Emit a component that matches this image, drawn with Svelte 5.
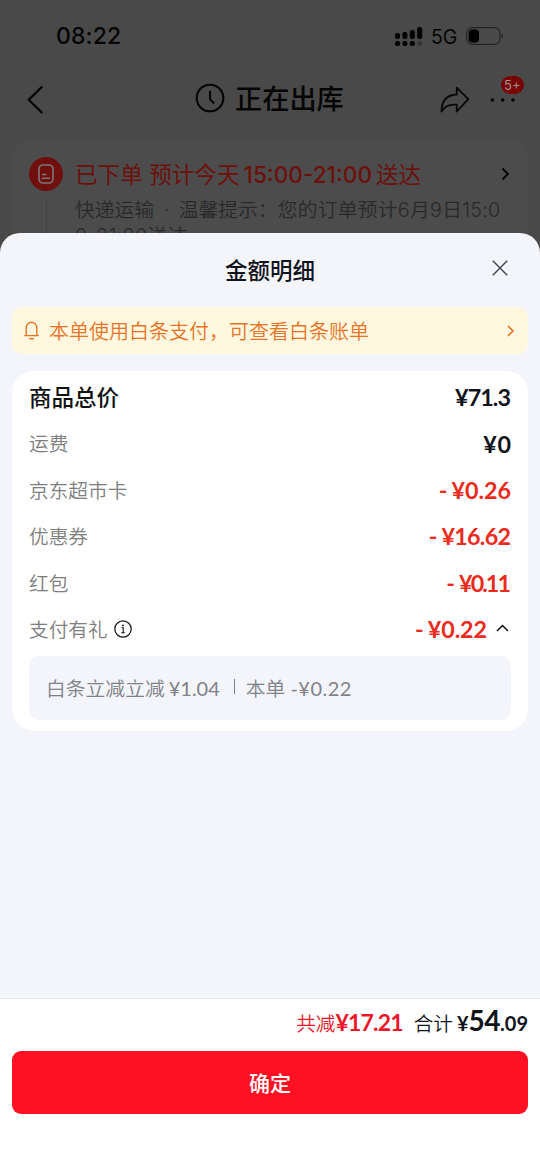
<script>
  const rows = [
    { label: '商品总价', value: '¥71.3', kind: 'total', spacing: -0.9 },
    { label: '运费', value: '¥0', kind: 'plain', spacing: 0.6 },
    { label: '京东超市卡', value: '¥0.26', kind: 'off', spacing: 0 },
    { label: '优惠券', value: '¥16.62', kind: 'off', spacing: -0.7 },
    { label: '红包', value: '¥0.11', kind: 'off', spacing: -1.9 },
    { label: '支付有礼', value: '¥0.22', kind: 'off', spacing: -0.1, open: true }
  ];
</script>

<div class="page">
  <div class="status">
    <span class="time">08:22</span>
    <svg class="signal" width="28" height="19" viewBox="0 0 28 19">
      <rect x="0" y="6" width="5" height="6" rx="2" />
      <rect x="7.4" y="5" width="5" height="7" rx="2" />
      <rect x="14.8" y="3" width="5" height="9" rx="2" />
      <rect x="22.2" y="0" width="5" height="12" rx="2" />
      <rect x="0" y="14" width="5" height="5" rx="2" />
      <rect x="7.4" y="14" width="5" height="5" rx="2" />
      <rect x="14.8" y="14" width="5" height="5" rx="2" />
      <rect x="22.2" y="14" width="5" height="5" rx="2" fill="#373737" />
    </svg>
    <span class="net">5G</span>
    <svg class="battery" width="38" height="18" viewBox="0 0 38 18">
      <rect x=".6" y=".6" width="33.4" height="16.8" rx="5.5" fill="none" stroke="#252525" stroke-width="1.1" />
      <rect x="2.6" y="2.6" width="10.4" height="12.8" rx="3.5" />
      <path d="M35.5 6.2Q38.5 9 35.5 11.8Z" fill="#222" />
    </svg>
  </div>

  <header>
    <svg class="back" width="18" height="30" viewBox="0 0 18 30"><path d="M15.3 1.5 1.8 14.8 15.3 28" fill="none" stroke="#050505" stroke-width="2.3" /></svg>
    <svg class="clock" width="30" height="30" viewBox="0 0 30 30"><g fill="none" stroke="#050505" stroke-width="2.1"><circle cx="15" cy="15" r="13.3" /><path d="M15 7.8v7.8q0 .8.7 1.5l3.5 3.4" /></g></svg>
    <h1>正在出库</h1>
    <svg class="share" width="30" height="28" viewBox="0 0 30 28"><path d="M16.8 1.6 28.3 13.2 16.8 25.5V18.7C9.2 18 4.5 20.2 1.5 25.5 1.6 15.5 6.3 8.8 16.8 8.5Z" fill="none" stroke="#080808" stroke-width="1.8" stroke-linejoin="round" /></svg>
    <div class="more">
      <svg width="26" height="6" viewBox="0 0 26 6"><circle cx="2.4" cy="3" r="1.8" /><circle cx="12.7" cy="3" r="1.8" /><circle cx="23" cy="3" r="1.8" /></svg>
      <span class="badge">5+</span>
    </div>
  </header>

  <section class="order">
    <div class="rail">
      <svg width="34" height="34" viewBox="0 0 34 34"><circle cx="17" cy="17" r="17" fill="#6f100f" /><g fill="none" stroke="#7c7777" stroke-width="1.6"><rect x="10" y="8" width="14" height="18" rx="4" /><path d="M13 17.5h4.5M13 21.3h8" /></g></svg>
      <i></i>
    </div>
    <div class="info">
      <div class="headline">已下单 预计今天<b>15:00-21:00</b>送达</div>
      <div class="tip"><span class="lead">快递运输<em>·</em>温馨提示：</span><span class="rest">您的订单预计6月9日15:0</span></div>
      <div class="tip more-tip">0-21:00送达</div>
    </div>
    <svg class="go" width="9" height="14" viewBox="0 0 9 14"><path d="m1.5 1.5 5.5 5.5-5.5 5.5" fill="none" stroke="#000" stroke-width="1.8" /></svg>
  </section>
</div>

<main class="sheet">
  <div class="title">
    <h2>金额明细</h2>
    <svg width="16" height="16" viewBox="0 0 16 16"><path d="m.8.8 14.4 14.4M15.2.8.8 15.2" stroke="#41434a" stroke-width="1.4" /></svg>
  </div>

  <div class="notice">
    <svg width="15" height="19" viewBox="0 0 15 19"><path d="M2.2 14.5V7a5.3 5.7 0 0 1 10.6 0v7.5M.2 14.6h14.6M5.2 17.8h4.6" fill="none" stroke="#e77426" stroke-width="1.4" /></svg>
    <span>本单使用白条支付，可查看白条账单</span>
    <svg class="arrow" width="8" height="12" viewBox="0 0 8 12"><path d="m1 1 5 5-5 5" fill="none" stroke="#e77426" stroke-width="1.6" /></svg>
  </div>

  <section class="card">
    {#each rows as row}
      <div class="row {row.kind}">
        <span class="label">{row.label}</span>
        {#if row.open}
          <svg class="hint" width="18" height="18" viewBox="0 0 18 18"><circle cx="9" cy="9" r="8.2" fill="none" stroke="#111" stroke-width="1.2" /><circle cx="9" cy="5.4" r=".9" /><path d="M7.5 7.8h1.7v5M7.3 12.8h3.6" fill="none" stroke="#111" stroke-width="1.1" /></svg>
        {/if}
        <span class="value">
          {#if row.kind === 'off'}<span class="minus">-</span>{/if}
          <span style:letter-spacing="{row.spacing}px" style:margin-right="{-row.spacing}px">{row.value}</span>
        </span>
        {#if row.open}
          <svg class="up" width="13" height="8" viewBox="0 0 13 8"><path d="m1 7 5.5-5.5L12 7" fill="none" stroke="#111" stroke-width="1.5" /></svg>
        {/if}
      </div>
    {/each}
    <div class="detail">
      <span class="word">白条立减立减</span><span class="num first">¥1.04</span><i></i><span class="word">本单</span><span class="num second">-¥0.22</span>
    </div>
  </section>

  <footer>
    <div class="sum">
      <span class="saved">共减</span><b class="saved-num">¥17.21</b>
      <span class="all">合计</span><b class="yen">¥</b><b class="big">54</b><b class="small">.09</b>
    </div>
    <button>确定</button>
  </footer>
</main>

<style>
  :global(body) { background: #494949; }
  * { box-sizing: border-box; }
  svg { display: block; flex: none; }
  h1, h2 { margin: 0; }
  .page, .sheet { font-family: Inter, 'Noto Sans CJK SC', sans-serif; width: 540px; white-space: nowrap; }
  .page { height: 253px; background: #494949; color: #050505; }

  .status { height: 72px; padding: 0 37px 0 56px; display: flex; align-items: center; }
  .time { font-size: 23px; font-weight: 500; letter-spacing: .15px; }
  .signal { margin-left: auto; }
  .net { font-size: 19.5px; margin: 1px 9px 0 8px; letter-spacing: -.2px; }
  .battery { margin-right: -1px; }

  header { height: 54px; display: flex; align-items: center; padding: 0 24px 0 27px; }
  .back { margin-top: 2px; }
  .clock { margin: -2px 0 0 150px; }
  h1 { font: 500 27.2px/54px 'Noto Sans CJK SC', sans-serif; margin: -4px 0 0 10px; }
  .share { margin: 1px 0 0 96px; }
  .more { position: relative; margin: 2px 0 0 20px; }
  .badge { position: absolute; left: 11px; top: -21px; width: 23px; height: 18px; border-radius: 9px; background: #790606; color: #a09090; font-size: 13px; line-height: 18px; text-align: center; }

  .order { width: 516px; height: 112px; margin: 15px 12px 0; border-radius: 16px 16px 0 0; background: #4c4c4c; display: flex; padding: 16px 20px 0 17px; }
  .rail { display: flex; flex-direction: column; align-items: center; gap: 7px; }
  .rail i { width: 1px; flex: 1; background: #424242; }
  .info { flex: 1; margin-left: 12px; padding-top: 1px; }
  .headline { font-size: 22.6px; line-height: 34px; color: #6d100d; font-weight: 400; }
  .headline b { font-weight: 500; margin: 0 4px; }
  .tip { font-size: 19.8px; line-height: 26px; color: #292929; font-weight: 350; margin-top: 5px; display: flex; }
  .tip em { font-style: normal; margin: 0 9.5px; }
  .rest { letter-spacing: .25px; }
  .more-tip { margin-top: 0; letter-spacing: .3px; }
  .go { margin-top: 10px; margin-right: -1px; }

  .sheet { position: relative; height: 935px; margin-top: -20px; border-radius: 20px 20px 0 0; background: #f4f5fa; display: flex; flex-direction: column; color: #11131a; font-family: 'Noto Sans CJK SC', sans-serif; }
  .title { height: 74px; display: grid; grid-template-columns: 1fr auto 1fr; align-items: center; padding: 0 32px; }
  h2 { grid-column: 2; font-size: 22.5px; line-height: 72px; font-weight: 500; margin: -2px 0 0; }
  .title svg { justify-self: end; margin-bottom: 4px; }
  .notice { height: 47px; flex: none; margin: 0 12px; padding: 0 13px 0 12px; border-radius: 10px; background: #fff8df; color: #e77426; display: flex; align-items: center; font-size: 20px; font-weight: 350; }
  .notice span { margin: -1px 0 0 10px; }
  .arrow { margin-left: auto; }

  .card { height: 360px; margin: 17px 12px 0; padding: 3px 17px 0; border-radius: 22px; background: #fff; }
  .row { height: 46.4px; display: flex; align-items: center; font-size: 19.7px; line-height: 40px; }
  .label { color: #7e7e7e; font-weight: 350; }
  .plain .label { margin-top: -1px; }
  .total .label { font-size: 22.5px; font-weight: 500; color: #111; margin-top: -3px; }
  .value { margin-left: auto; display: flex; align-items: center; font: 700 23.3px/40px Lato, sans-serif; color: #11131a; }
  .off .value { color: #ed2b1c; }
  .minus { margin-right: 4px; }
  .hint { margin-left: 6px; }
  .up { margin: -2px 2px 0 9px; }
  .detail { height: 64px; margin-top: 4px; padding-left: 17px; border-radius: 10px; background: #f4f5fa; color: #808289; font-size: 19.8px; font-weight: 350; display: flex; align-items: center; }
  .word { margin-top: -2px; }
  .num { font-family: Lato, sans-serif; font-weight: 400; font-size: 20px; }
  .first { margin-left: 4px; }
  .second { margin-left: 5px; letter-spacing: .5px; }
  .detail i { width: 1px; height: 15px; background: #808289; margin: -3px 11px 0 14px; }

  footer { height: 170px; margin-top: auto; padding: 0 12px; border-top: 1px solid #e5e6ea; background: #fff; }
  .sum { height: 52px; display: flex; justify-content: flex-end; align-items: baseline; line-height: 42px; font-size: 19.6px; font-weight: 350; }
  .sum b { font-family: Lato, sans-serif; font-weight: 700; }
  .saved { color: #ee1629; }
  .saved-num { color: #ee1629; font-size: 23px; letter-spacing: -.8px; }
  .all { margin-left: 11px; }
  .yen { font-size: 20px; margin-left: 4px; }
  .big { font-size: 28px; letter-spacing: -.5px; }
  .small { font-size: 20px; }
  button { display: block; width: 100%; height: 63px; padding: 0 0 1px; border: 0; border-radius: 9px; background: #ff1022; color: #fff; font: 500 21px/60px 'Noto Sans CJK SC', sans-serif; }
</style>
